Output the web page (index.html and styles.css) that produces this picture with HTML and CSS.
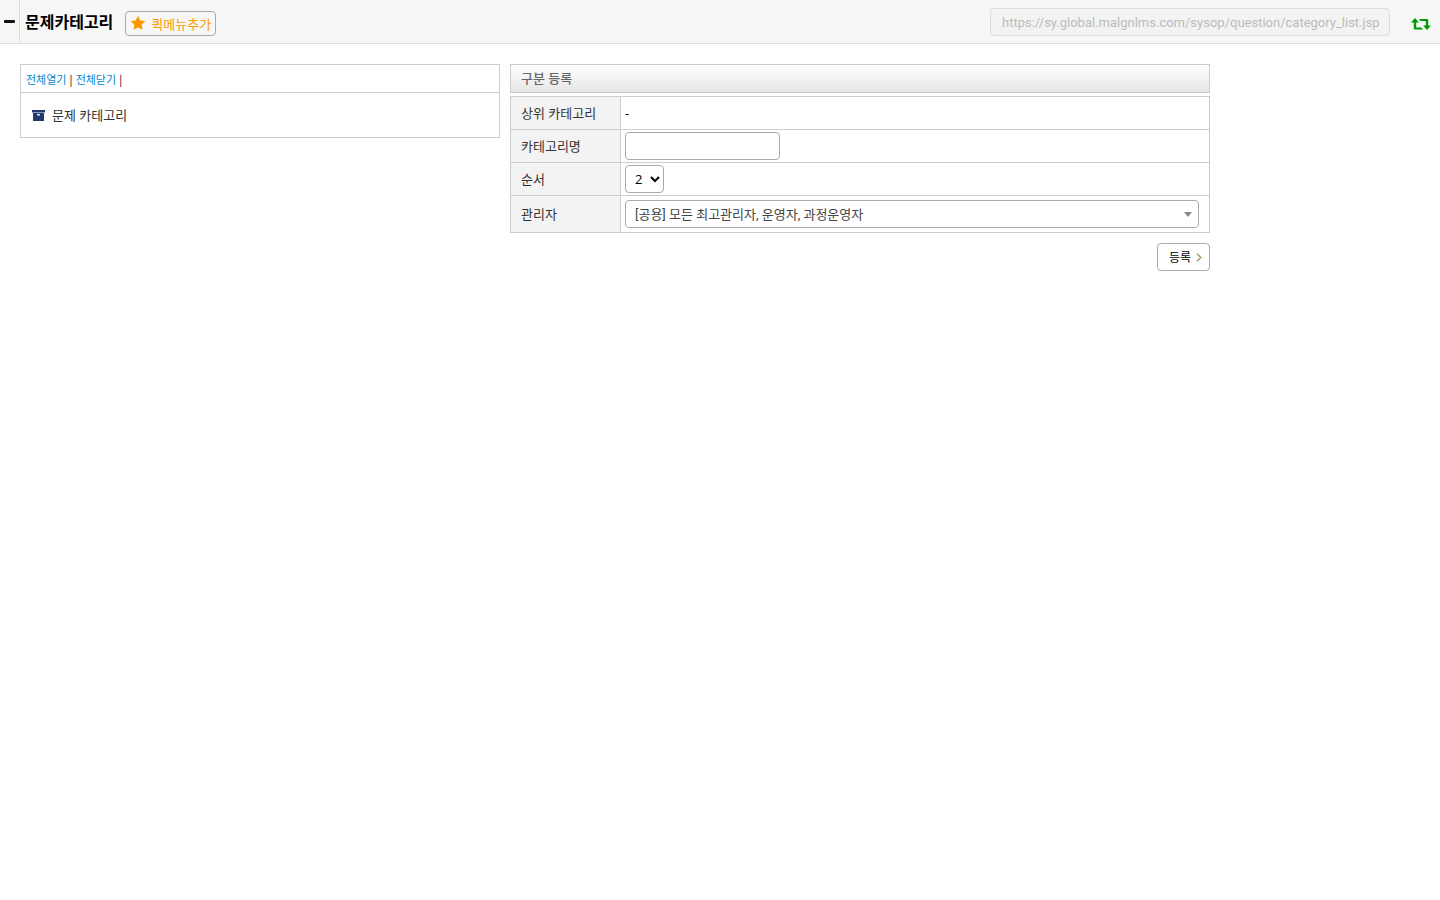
FILE: index.html
```html
<!DOCTYPE html>
<html lang="ko">
  <head>
    <meta charset="UTF-8" />
    <meta name="viewport" content="width=device-width, initial-scale=1.0" />
    <title>문제카테고리</title>
    <link rel="stylesheet" href="styles.css">
  </head>
  <body>
    <header class="topbar">
      <button class="fold" type="button" aria-label="메뉴 접기">
        <svg width="11" height="3" viewBox="0 0 11 3"><rect width="11" height="3" rx="1" fill="#111" /></svg>
      </button>
      <h1>문제카테고리</h1>
      <button class="quick" type="button">
        <svg width="16" height="16" viewBox="0 0 16 16">
          <path d="M8 .8l2.300 4.600 5.100.7-3.700 3.600.9 5.100L8 12.400l-4.600 2.400.9-5.100L.6 6.100l5.100-.7z" fill="#ff9900" />
        </svg>
        퀵메뉴추가
      </button>
      <input class="url" type="text" aria-label="URL" value="https://sy.global.malgnlms.com/sysop/question/category_list.jsp" readonly />
      <button class="reload" type="button" aria-label="새로고침">
        <svg width="20" height="14" viewBox="0 0 20 14" fill="#090">
          <path d="M4 1l4 4.500H5.200v5H10.500l1.600 2H3.800q-1 0-1-1v-6H0z" />
          <path d="M16 13l-4-4.500h2.800V4H9.500L7.900 2h8.300q1 0 1 1v5.500H20z" />
        </svg>
      </button>
    </header>

    <main class="content">
      <section class="tree">
        <div class="tree-menu">
          <a href="#">전체열기</a> | <a href="#">전체닫기</a> |
        </div>
        <div class="tree-body">
          <svg width="13" height="12" viewBox="0 0 13 12">
            <path d="M0 1h13v2H0z" fill="#23386f" />
            <path d="M1 4h11v8H1z" fill="#23386f" />
            <path d="M0 3h13v1H0z" fill="#8f9cbd" />
            <path d="M5 5h3v1.500H5z" fill="#e4e8f2" />
          </svg>
          <span>문제 카테고리</span>
        </div>
      </section>

      <form class="category">
        <h2>구분 등록</h2>
        <table>
          <tr>
            <th scope="row">상위 카테고리</th>
            <td>-</td>
          </tr>
          <tr>
            <th scope="row"><label for="name">카테고리명</label></th>
            <td><input class="field name" type="text" id="name" name="name" /></td>
          </tr>
          <tr>
            <th scope="row"><label for="sort">순서</label></th>
            <td>
              <select class="field sort" id="sort" name="sort">
                <option>1</option>
                <option selected>2</option>
              </select>
            </td>
          </tr>
          <tr class="manager-row">
            <th scope="row"><label for="manager">관리자</label></th>
            <td>
              <div class="manager-box">
                <select class="field manager" id="manager" name="manager">
                  <option>[공용] 모든 최고관리자, 운영자, 과정운영자</option>
                </select>
              </div>
            </td>
          </tr>
        </table>
        <div class="buttons">
          <button class="submit" type="submit">
            등록
            <svg width="6" height="9" viewBox="0 0 6 9"><path d="M1 .7L4.800 4.500 1 8.300" fill="none" stroke="#a99a6a" stroke-width="1.400" /></svg>
          </button>
        </div>
      </form>
    </main>
  </body>
</html>
```

FILE: styles.css
```css
* {
  box-sizing: border-box;
}

body {
  margin: 0;
  background: #fff;
  color: #333;
  font-family: "Open Sans", "Noto Sans CJK KR", sans-serif;
  font-size: 13px;
  line-height: 18px;
}

button,
input,
select {
  font-family: inherit;
  font-size: 13px;
}

button {
  cursor: pointer;
}

svg {
  display: block;
  flex: none;
}

/* top bar */
.topbar {
  display: flex;
  align-items: center;
  height: 44px;
  padding-right: 9px;
  background: #f7f7f7;
  border-bottom: 1px solid #ddd;
}

.fold {
  width: 20px;
  height: 43px;
  padding: 0 0 0 4px;
  background: none;
  border: none;
  border-right: 1px solid #ddd;
}

.topbar h1 {
  margin: 0 12px 0 5px;
  color: #000;
  font-size: 16px;
  font-weight: bold;
}

.quick {
  display: flex;
  align-items: center;
  gap: 5px;
  height: 25px;
  margin-top: 3px;
  padding: 0 4px;
  background: #f7f7f7;
  border: 1px solid #aaa;
  border-radius: 4px;
  color: #ff9900;
}

.url {
  width: 400px;
  height: 28px;
  margin-left: auto;
  padding: 2px 4px 0 11px;
  background: #f3f3f3;
  border: 1px solid #ddd;
  border-radius: 4px;
  color: #bbb;
  font-family: Roboto, "Noto Sans CJK KR", sans-serif;
}

.reload {
  margin-left: 21px;
  padding: 4px 0 0;
  background: none;
  border: none;
}

/* content */
.content {
  display: flex;
  align-items: flex-start;
  gap: 10px;
  max-width: 1230px;
  padding: 20px 20px 0;
}

.tree {
  flex: 0 1 480px;
  border: 1px solid #ccc;
}

.tree-menu {
  height: 28px;
  padding: 0 5px;
  border-bottom: 1px solid #ccc;
  color: #000;
  font-family: "Noto Sans CJK KR", sans-serif;
  font-size: 11px;
  line-height: 28px;
}

.tree-menu a {
  color: #0088cc;
  text-decoration: none;
}

.tree-body {
  display: flex;
  align-items: center;
  gap: 7px;
  height: 44px;
  padding: 0 11px;
}

.category {
  flex: 1;
}

.category h2 {
  height: 29px;
  margin: 0 0 3px;
  padding: 0 10px;
  background: linear-gradient(#fff, #e6e6e6);
  border: 1px solid #ccc;
  color: #666;
  font-size: 13px;
  font-weight: 500;
  line-height: 26px;
}

.category table {
  width: 100%;
  border-collapse: collapse;
}

.category th,
.category td {
  height: 33px;
  padding: 0 4px;
  border: 1px solid #ccc;
}

.category td {
  color: #000;
}

.category th {
  width: 110px;
  padding: 0 10px;
  background: #f3f3f3;
  font-weight: normal;
  text-align: left;
}

.manager-row td {
  height: 37px;
  padding-right: 10px;
}

.field {
  display: block;
  height: 28px;
  background: #fff;
  border: 1px solid #aaa;
  border-radius: 4px;
  color: #000;
}

.name {
  width: 155px;
  padding: 0 8px;
}

.sort {
  width: 39px;
  padding: 0 0 0 5px;
}

.manager-box {
  position: relative;
}

.manager {
  appearance: none;
  width: 100%;
  padding: 0 24px 0 9px;
  color: #444;
  font-family: Roboto, "Noto Sans CJK KR", sans-serif;
}

/* arrow over the select */
.manager-box::after {
  content: "";
  position: absolute;
  top: 12px;
  right: 7px;
  border: 4px solid transparent;
  border-top: 5px solid #888;
  border-bottom: 0;
  pointer-events: none;
}

.buttons {
  display: flex;
  justify-content: flex-end;
  margin-top: 10px;
}

.submit {
  display: flex;
  align-items: center;
  gap: 5px;
  height: 28px;
  padding: 0 7px 0 11px;
  background: #fff;
  border: 1px solid #aaa;
  border-radius: 4px;
  color: #000;
  font-size: 12px;
}
```
